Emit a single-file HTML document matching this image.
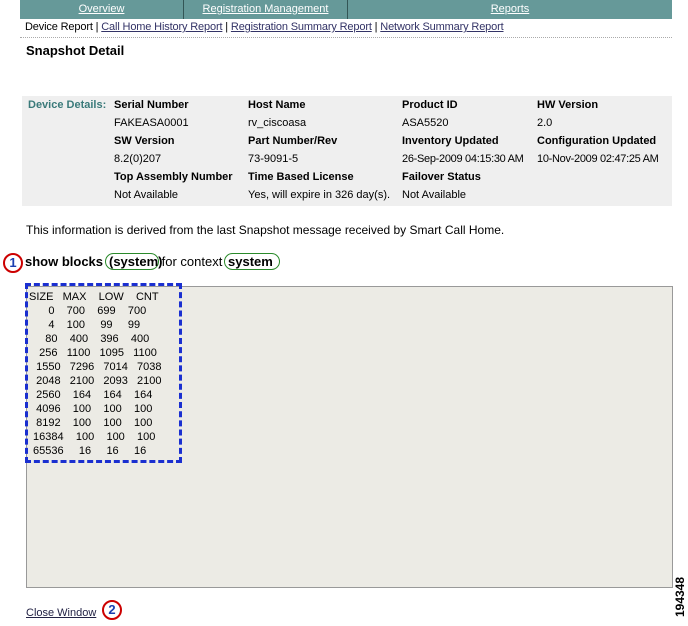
<!DOCTYPE html>
<html><head><style>
body{margin:0;width:688px;height:626px;background:#fff;font-family:"Liberation Sans",Arial,sans-serif;position:relative;overflow:hidden;color:#000}
.a{position:absolute;white-space:nowrap}
.nav{position:absolute;top:0;height:19px;background:#669999;color:#fff;font-size:11px;text-align:center;line-height:18px;text-decoration:underline}
.sub{font-size:11px;top:21px;letter-spacing:-0.15px}
.sub a{color:#336;text-decoration:underline}
.t{font-size:11px}
.b{font-weight:bold}
.c{position:absolute;border:2px solid #c00;border-radius:50%;width:16px;height:16px;color:#1a3fb0;font-size:13px;text-align:center;line-height:16px;font-weight:bold}
.ov{position:absolute;border:1.5px solid #2a8a2a;border-radius:9px;height:15px}
.mono{font-size:11px;line-height:14px}
</style></head><body>
<div class="nav" style="left:20px;width:163px">Overview</div>
<div class="nav" style="left:184px;width:163px">Registration Management</div>
<div class="nav" style="left:348px;width:324px">Reports</div>
<div style="position:absolute;left:183px;top:0;width:1px;height:19px;background:#335555"></div>
<div style="position:absolute;left:347px;top:0;width:1px;height:19px;background:#335555"></div>
<div class="a sub" style="left:25px">Device Report | <a>Call Home History Report</a> | <a>Registration Summary Report</a> | <a>Network Summary Report</a></div>
<div style="position:absolute;left:20px;top:37px;width:652px;border-top:1px dotted #aaa"></div>
<div class="a b" style="left:26px;top:43px;font-size:13px">Snapshot Detail</div>

<div style="position:absolute;left:22px;top:96px;width:650px;height:110px;background:#efefef"></div>
<div class="a t b" style="left:28px;top:99px;color:#3a7a7a">Device Details:</div>
<div class="a t b" style="left:114px;top:99px">Serial Number</div>
<div class="a t b" style="left:248px;top:99px">Host Name</div>
<div class="a t b" style="left:402px;top:99px">Product ID</div>
<div class="a t b" style="left:537px;top:99px">HW Version</div>
<div class="a t" style="left:114px;top:117px">FAKEASA0001</div>
<div class="a t" style="left:248px;top:117px">rv_ciscoasa</div>
<div class="a t" style="left:402px;top:117px">ASA5520</div>
<div class="a t" style="left:537px;top:117px">2.0</div>
<div class="a t b" style="left:114px;top:135px">SW Version</div>
<div class="a t b" style="left:248px;top:135px">Part Number/Rev</div>
<div class="a t b" style="left:402px;top:135px">Inventory Updated</div>
<div class="a t b" style="left:537px;top:135px">Configuration Updated</div>
<div class="a t" style="left:114px;top:153px">8.2(0)207</div>
<div class="a t" style="left:248px;top:153px">73-9091-5</div>
<div class="a t" style="left:402px;top:153px;letter-spacing:-0.3px">26-Sep-2009 04:15:30 AM</div>
<div class="a t" style="left:537px;top:153px;letter-spacing:-0.3px">10-Nov-2009 02:47:25 AM</div>
<div class="a t b" style="left:114px;top:171px">Top Assembly Number</div>
<div class="a t b" style="left:248px;top:171px">Time Based License</div>
<div class="a t b" style="left:402px;top:171px">Failover Status</div>
<div class="a t" style="left:114px;top:189px">Not Available</div>
<div class="a t" style="left:248px;top:189px">Yes, will expire in 326 day(s).</div>
<div class="a t" style="left:402px;top:189px">Not Available</div>

<div class="a" style="left:26px;top:223px;font-size:12px">This information is derived from the last Snapshot message received by Smart Call Home.</div>

<div class="c" style="left:3px;top:253px">1</div>
<div class="a" style="left:25px;top:254px;font-size:13px"><b>show blocks </b><span style="display:inline-block;width:55px"></span>for context</div>
<div class="ov" style="left:105px;top:253px;width:52px"></div>
<div class="a b" style="left:109px;top:254px;font-size:13px">(system)</div>
<div class="ov" style="left:224px;top:253px;width:54px"></div>
<div class="a b" style="left:228px;top:254px;font-size:13px">system</div>

<div style="position:absolute;left:26px;top:286px;width:645px;height:300px;background:#ecebe5;border:1px solid #999"></div>
<div style="position:absolute;left:25px;top:283px;width:151px;height:174px;border:3px dashed #1a2fd0"></div>
<div class="a mono" style="left:29px;top:290px">SIZE&nbsp;&nbsp;&nbsp;MAX&nbsp;&nbsp;&nbsp;&nbsp;LOW&nbsp;&nbsp;&nbsp;&nbsp;CNT</div>
<pre class="mono" style="position:absolute;white-space:pre;left:30px;top:304px;margin:0;font-family:'Liberation Sans',Arial,sans-serif">      0    700    699    700
      4    100     99     99
     80    400    396    400
   256   1100   1095   1100
  1550   7296   7014   7038
  2048   2100   2093   2100
  2560    164    164    164
  4096    100    100    100
  8192    100    100    100
 16384    100    100    100
 65536     16     16     16</pre>

<div class="a" style="left:26px;top:607px;font-size:11px;color:#224;text-decoration:underline">Close Window</div>
<div class="c" style="left:102px;top:600px">2</div>
<div class="a b" style="left:660px;top:590px;font-size:12px;transform:rotate(-90deg)">194348</div>
</body></html>
